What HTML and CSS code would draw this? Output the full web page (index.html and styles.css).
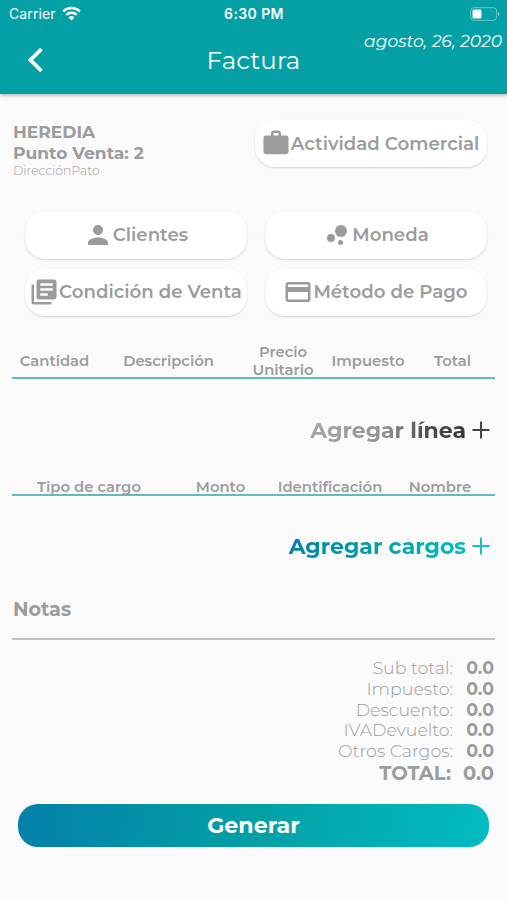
FILE: index.html
```html
<!DOCTYPE html>
<html lang="es">
<head>
    <meta charset="UTF-8">
    <meta name="viewport" content="width=device-width, initial-scale=1.0">
    <title>Factura</title>
    <link rel="stylesheet" href="styles.css">
</head>
<body>
    <header class="header">
        <div class="status-bar">
            <div class="carrier">
                <span class="carrier-name">Carrier</span>
                <svg width="19" height="15" viewBox="0 0 19 15" fill="none" stroke="#fff" stroke-width="2.5">
                    <path d="M1.2 5.3a12 12 0 0 1 16.6 0"/>
                    <path d="M4.3 8.8a7.5 7.5 0 0 1 10.4 0"/>
                    <path d="M9.5 14.4L6.6 11.4a4.2 4.2 0 0 1 5.8 0z" fill="#fff" stroke="none"/>
                </svg>
            </div>
            <span class="clock">6:30 PM</span>
            <svg class="battery" width="30" height="14" viewBox="0 0 30 14">
                <rect x=".7" y=".7" width="26" height="12.6" rx="3.4" fill="none" stroke="#fff" stroke-opacity=".42"/>
                <rect x="2.5" y="2.5" width="9" height="9" rx="1.5" fill="#fff"/>
                <path d="M28 4.8v4.4c1.8-.7 1.8-3.7 0-4.4z" fill="#fff" fill-opacity=".5"/>
            </svg>
        </div>
        <div class="toolbar">
            <button class="back" aria-label="Volver">
                <svg width="17" height="26" viewBox="0 0 17 26" fill="none" stroke="#fff" stroke-width="3.8">
                    <path d="M14.5 2L3.5 13l11 11"/>
                </svg>
            </button>
            <h1>Factura</h1>
            <span class="date">agosto, 26, 2020</span>
        </div>
    </header>

    <main class="content">
        <section class="store">
            <div class="store-info">
                <p class="store-name">HEREDIA</p>
                <p class="store-pos">Punto Venta: 2</p>
                <p class="store-address">DirecciónPato</p>
            </div>
            <button class="pill activity">
                <svg width="30" height="30" viewBox="0 0 24 24"><path d="M10 2h4c1.1 0 2 .9 2 2v2h4c1.1 0 2 .9 2 2v11c0 1.1-.9 2-2 2H4c-1.1 0-2-.9-2-2V8c0-1.1.9-2 2-2h4V4c0-1.1.9-2 2-2zm4 4V4h-4v2z"/></svg>
                <span>Actividad Comercial</span>
            </button>
        </section>

        <section class="options">
            <button class="pill">
                <svg width="30" height="30" viewBox="0 0 24 24"><path d="M12 12c2.21 0 4-1.79 4-4s-1.79-4-4-4-4 1.79-4 4 1.79 4 4 4zm0 2c-2.67 0-8 1.34-8 4v2h16v-2c0-2.66-5.33-4-8-4z"/></svg>
                <span>Clientes</span>
            </button>
            <button class="pill">
                <svg width="30" height="30" viewBox="0 0 24 24"><circle cx="7.2" cy="14.4" r="3.2"/><circle cx="14.8" cy="18" r="2"/><circle cx="15.2" cy="8.8" r="4.8"/></svg>
                <span>Moneda</span>
            </button>
            <button class="pill">
                <svg width="30" height="30" viewBox="0 0 24 24"><path d="M4 6H2v14c0 1.1.9 2 2 2h14v-2H4V6zm16-4H8c-1.1 0-2 .9-2 2v12c0 1.1.9 2 2 2h12c1.1 0 2-.9 2-2V4c0-1.1-.9-2-2-2zm-1 9H9V9h10v2zm-4 4H9v-2h6v2zm4-8H9V5h10v2z"/></svg>
                <span>Condición de Venta</span>
            </button>
            <button class="pill">
                <svg width="30" height="30" viewBox="0 0 24 24"><path d="M20 4H4c-1.11 0-1.99.89-1.99 2L2 18c0 1.11.89 2 2 2h16c1.11 0 2-.89 2-2V6c0-1.11-.89-2-2-2zm0 14H4v-6h16v6zm0-10H4V6h16v2z"/></svg>
                <span>Método de Pago</span>
            </button>
        </section>

        <div class="table-head lines-head">
            <span>Cantidad</span>
            <span>Descripción</span>
            <span>Precio<br>Unitario</span>
            <span>Impuesto</span>
            <span>Total</span>
        </div>
        <button class="add add-line">
            <span>Agregar línea</span>
            <svg width="18" height="18" viewBox="0 0 18 18"><path d="M8 .5h2V8h7.5v2H10v7.5H8V10H.5V8H8z"/></svg>
        </button>

        <div class="table-head charges-head">
            <span>Tipo de cargo</span>
            <span>Monto</span>
            <span>Identificación</span>
            <span>Nombre</span>
        </div>
        <button class="add add-charge">
            <span>Agregar cargos</span>
            <svg width="18" height="18" viewBox="0 0 18 18"><path d="M8 .5h2V8h7.5v2H10v7.5H8V10H.5V8H8z"/></svg>
        </button>

        <div class="notes">Notas</div>

        <dl class="totals">
            <dt>Sub total:</dt><dd>0.0</dd>
            <dt>Impuesto:</dt><dd>0.0</dd>
            <dt>Descuento:</dt><dd>0.0</dd>
            <dt>IVADevuelto:</dt><dd>0.0</dd>
            <dt>Otros Cargos:</dt><dd>0.0</dd>
            <dt class="grand">TOTAL:</dt><dd class="grand">0.0</dd>
        </dl>

        <button class="submit">Generar</button>
    </main>
</body>
</html>
```
FILE: styles.css
```css
:root {
    --primary: #03a0a5;
    --background: #fafafa;
    --text: #9b9c9d;
    --line: #5dbcc0;
}

* {
    box-sizing: border-box;
}

body {
    margin: 0;
    min-height: 900px;
    background: var(--background);
    color: var(--text);
    font-family: Montserrat, Inter, sans-serif;
}

h1, p, dl, dd {
    margin: 0;
}

button {
    border: none;
    background: none;
    padding: 0;
    color: inherit;
    font-family: inherit;
    cursor: pointer;
}

svg {
    flex-shrink: 0;
}

span {
    white-space: nowrap;
}

/* Header */
.header {
    height: 94px;
    background: var(--primary);
    color: #fff;
    box-shadow: 0 1px 4px rgba(0, 0, 0, 0.35);
}

.status-bar {
    height: 28px;
    padding: 0 7px 0 9px;
    display: grid;
    grid-template-columns: 1fr auto 1fr;
    align-items: center;
    font-family: Inter, sans-serif;
    font-size: 14px;
}

.carrier {
    display: flex;
    align-items: center;
    gap: 6px;
    margin-top: -1px;
    letter-spacing: 0.1px;
}

.carrier svg {
    margin-top: -1px;
}

.clock {
    margin: -1px 1px 0 0;
    font-size: 14px;
    font-weight: 600;
    letter-spacing: 0.4px;
}

.battery {
    justify-self: end;
    margin-top: -1px;
}

.toolbar {
    height: 66px;
    padding: 0 5px 0 27px;
    display: grid;
    grid-template-columns: 1fr auto 1fr;
    align-items: center;
}

.back {
    display: flex;
    justify-self: start;
    margin-top: -3px;
}

.toolbar h1 {
    margin: -3px 22px 0 0;
    font-size: 24.5px;
    font-weight: 400;
    line-height: 30px;
    letter-spacing: 0.1px;
}

.date {
    align-self: start;
    justify-self: end;
    margin: 3px 0 0 -40px;
    font-size: 17.1px;
    font-style: italic;
    line-height: 20px;
}

/* Store */
.content {
    padding: 26px 12px 0;
}

.store {
    display: flex;
    justify-content: space-between;
    height: 92px;
    padding-right: 8px;
}

.store-info {
    padding: 1px 0 0 1px;
}

.store-name, .store-pos {
    font-size: 17.1px;
    font-weight: 700;
    line-height: 21px;
}

.store-address {
    font-size: 12.4px;
    font-weight: 300;
    line-height: 15px;
}

/* Buttons */
.pill {
    height: 47px;
    display: flex;
    align-items: center;
    justify-content: center;
    padding: 0 1px 2px 0;
    background: #fff;
    border-radius: 20px;
    box-shadow: 0 1px 2px rgba(0, 0, 0, 0.16);
    fill: #9b9b9b;
    font-size: 18.2px;
    font-weight: 600;
}

.activity {
    width: 232px;
    padding: 0 2px 1px 0;
}

.options {
    display: grid;
    grid-template-columns: 222px 222px;
    column-gap: 18px;
    row-gap: 10px;
    padding-left: 13px;
}

/* Tables */
.table-head {
    display: grid;
    align-items: center;
    text-align: center;
    border-bottom: 2px solid var(--line);
    font-size: 14.8px;
    font-weight: 600;
    line-height: 18px;
}

.lines-head {
    height: 37px;
    margin-top: 26px;
    grid-template-columns: 85px 143px 86px 84px 85px;
}

.lines-head span {
    padding-top: 1px;
}

.charges-head {
    height: 18px;
    margin-top: 33px;
    grid-template-columns: 154px 109px 110px 110px;
}

.add {
    display: flex;
    align-items: center;
    gap: 6px;
    height: 30px;
    margin: 36px 5px 0 auto;
    font-size: 22px;
    font-weight: 700;
}

.add span {
    background-clip: text;
    -webkit-background-clip: text;
    color: transparent;
}

.add-line {
    fill: #444;
}

.add-line span {
    background-image: linear-gradient(100deg, #a4a8aa 0%, #909496 48%, #505254 72%, #333 100%);
}

.add-charge {
    margin-top: 35px;
    fill: #16bfc3;
}

.add-charge span {
    background-image: linear-gradient(100deg, #0280a8, #03a0a5 50%, #02bcc2);
}

/* Notes and totals */
.notes {
    height: 47px;
    margin-top: 32px;
    padding: 4px 0 0 1px;
    border-bottom: 2px solid #c0c2c2;
    font-size: 19.2px;
    font-weight: 700;
    line-height: 24px;
}

.totals {
    display: grid;
    grid-template-columns: 1fr 41px;
    grid-template-rows: repeat(5, 20.8px) 21px;
    margin-top: 18px;
    padding-right: 1px;
    text-align: right;
    font-size: 17.4px;
    font-weight: 300;
    line-height: 20px;
}

.totals dd {
    font-weight: 700;
}

.totals .grand {
    font-size: 19.5px;
    font-weight: 700;
    line-height: 22px;
}

.totals dt.grand {
    padding-right: 2px;
}

.submit {
    display: block;
    width: 471px;
    height: 43px;
    margin: 21px 0 0 6px;
    border-radius: 20px;
    background: linear-gradient(100deg, #0380aa, #03a0a5 50%, #02bcc2);
    color: #fff;
    font-size: 22.2px;
    font-weight: 700;
}
```
